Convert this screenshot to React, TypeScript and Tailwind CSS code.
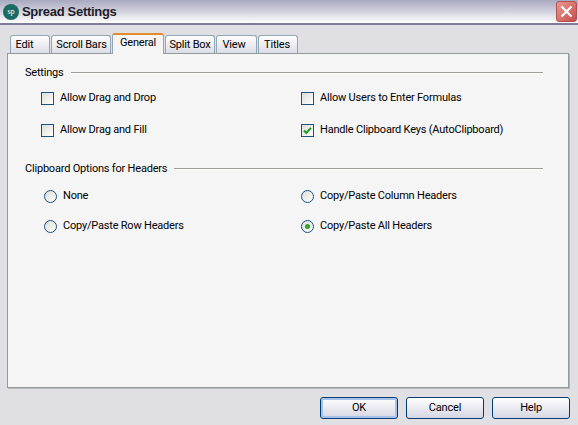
import React from 'react';

const tabs = ['Edit', 'Scroll Bars', 'General', 'Split Box', 'View', 'Titles'];
const tabStyles: Record<string, string> = {
  Edit: 'w-[40px] pr-[11px]',
  'Scroll Bars': 'w-[60px] pl-[1px]',
  General: 'w-[52px]',
  'Split Box': 'w-[50px]',
  View: 'w-[41px] pr-[5px]',
  Titles: 'w-[40px] pr-[2px]',
};

function Check({ label, checked }: { label: string; checked?: boolean }) {
  return (
    <div className="flex items-center gap-[6px] h-[14px]">
      <div className="w-[13px] h-[13px] border border-[#1c5180] bg-gradient-to-br from-[#dcdcd7] to-white flex items-center justify-center">
        {checked && (
          <svg width="9" height="9" viewBox="0 0 9 9">
            <path d="M1 4.5 L3.3 7 L8 1.8" fill="none" stroke="#21a121" strokeWidth="2" />
          </svg>
        )}
      </div>
      <span>{label}</span>
    </div>
  );
}

function Radio({ label, checked }: { label: string; checked?: boolean }) {
  return (
    <div className="flex items-center gap-[6px] h-[14px]">
      <div className="w-[13px] h-[13px] rounded-full border border-[#1c5180] bg-gradient-to-br from-[#dcdcd7] to-white flex items-center justify-center">
        {checked && <div className="w-[5px] h-[5px] rounded-full bg-[#2fa52f]" />}
      </div>
      <span>{label}</span>
    </div>
  );
}

function GroupHeading({ label }: { label: string }) {
  return (
    <div className="flex items-center gap-[7px] h-[14px] pr-[25px]">
      <span>{label}</span>
      <div className="flex-1 h-[2px] border-t border-[#a0a09a] bg-white" />
    </div>
  );
}

function Btn({ label, active }: { label: string; active?: boolean }) {
  return (
    <button
      className={`w-[78px] h-[22px] rounded-[3px] border border-[#003c74] bg-gradient-to-b from-white to-[#d6d6e4] text-black ${
        active ? 'shadow-[inset_0_0_0_2px_#a4c2ea]' : ''
      }`}
    >
      {label}
    </button>
  );
}

export default function App() {
  return (
    <div className="w-[578px] h-[425px] overflow-hidden bg-[#e0dfe3] text-[11px] leading-[14px] tracking-[-0.2px] text-black font-['Roboto',sans-serif]">
      {/* Title bar */}
      <div className="h-[25px] border-b-2 border-[#7d7d9b] bg-gradient-to-b from-[#a8a8c0] via-[#d2d2de] to-white flex items-center pl-[3px] pr-[1px]">
        <div className="w-[16px] h-[16px] rounded-full bg-[#1a6b63] text-white text-[8px] leading-[16px] text-center tracking-normal font-['Liberation_Serif',serif]">
          sp
        </div>
        <span className="ml-[3px] text-[13px] font-bold tracking-[-0.3px] text-[#1c1c2a] font-['Liberation_Sans',sans-serif]">
          Spread Settings
        </span>
        <div className="ml-auto w-[21px] h-[21px] rounded-[3px] border border-[#b05050] bg-gradient-to-br from-[#e89a90] to-[#c84a4a] flex items-center justify-center">
          <svg width="13" height="13" viewBox="0 0 13 13">
            <path d="M1.5 1.5 L11.5 11.5 M11.5 1.5 L1.5 11.5" stroke="#fff" strokeWidth="2.2" />
          </svg>
        </div>
      </div>

      {/* Tabs */}
      <div className="flex items-end h-[28px] pl-[10px] gap-[1px]">
        {tabs.map((t) =>
          t === 'General' ? (
            <div
              key={t}
              className={`${tabStyles[t]} h-[21px] -mb-[1px] relative z-10 bg-[#f5f5f5] border-x border-[#91a7b4] border-t-2 border-t-[#e68b2c] rounded-t-[3px] text-center leading-[16px]`}
            >
              {t}
            </div>
          ) : (
            <div
              key={t}
              className={`${tabStyles[t]} h-[18px] bg-gradient-to-b from-white to-[#dcdce6] border-x border-t border-[#91a7b4] rounded-t-[3px] text-center leading-[18px]`}
            >
              {t}
            </div>
          )
        )}
      </div>

      {/* Panel */}
      <div className="ml-[7px] mr-[9px] h-[335px] border border-[#919b9c] shadow-[1px_1px_0_#b8b8b0] bg-[#f5f5f5] pt-[12px] pl-[17px]">
        <GroupHeading label="Settings" />
        <div className="grid grid-cols-[260px_1fr] gap-y-[18px] mt-[11px] pl-[16px]">
          <Check label="Allow Drag and Drop" />
          <Check label="Allow Users to Enter Formulas" />
          <Check label="Allow Drag and Fill" />
          <Check label="Handle Clipboard Keys (AutoClipboard)" checked />
        </div>
        <div className="mt-[25px]">
          <GroupHeading label="Clipboard Options for Headers" />
        </div>
        <div className="grid grid-cols-[257px_1fr] gap-y-[16px] mt-[13px] pl-[19px]">
          <Radio label="None" />
          <Radio label="Copy/Paste Column Headers" />
          <Radio label="Copy/Paste Row Headers" />
          <Radio label="Copy/Paste All Headers" checked />
        </div>
      </div>

      {/* Buttons */}
      <div className="flex justify-end gap-[8px] pr-[8px] mt-[9px]">
        <Btn label="OK" active />
        <Btn label="Cancel" />
        <Btn label="Help" />
      </div>
    </div>
  );
}
